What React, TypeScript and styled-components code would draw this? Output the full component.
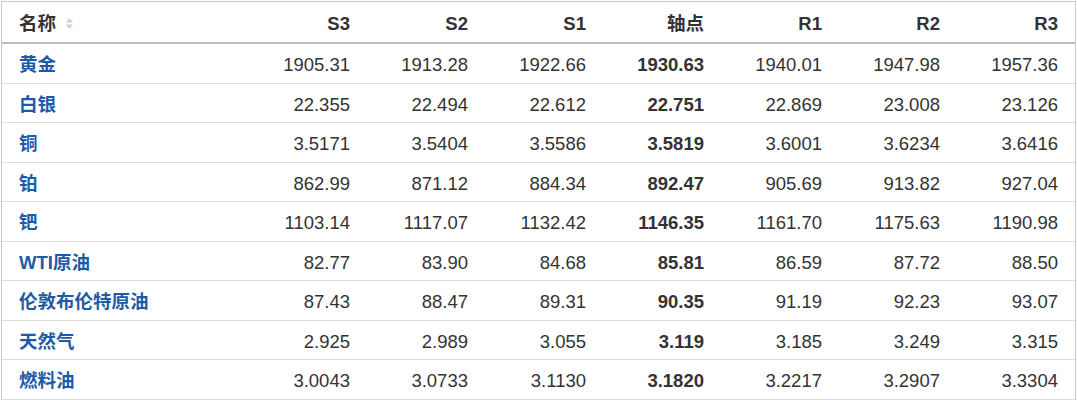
import React from "react";
import styled, { createGlobalStyle } from "styled-components";

const Global = createGlobalStyle`
  html, body { margin: 0; padding: 0; background: #fff; }
  body { font-family: "Liberation Sans", Arial, "Noto Sans CJK SC", sans-serif; color: #333; }
`;

const Wrapper = styled.div`
  margin: 1px 1px 0 1px;
  border: 1px solid #c8c8c8;
  border-bottom: none;
  background: #fff;
`;

const Table = styled.table`
  width: 100%;
  border-collapse: collapse;
  table-layout: fixed;
  font-size: 18.5px;
`;

const HeadCell = styled.th<{ $left?: boolean }>`
  padding: 10px 17px 7px;
  line-height: 23px;
  font-weight: bold;
  color: #333;
  text-align: ${(p) => (p.$left ? "left" : "right")};
  border-bottom: 2px solid #bdbdbd;
  white-space: nowrap;
`;

const Row = styled.tr`
  border-bottom: 1px solid #dcdcdc;
`;

const NameCell = styled.td`
  padding: 10px 17px 6px;
  line-height: 22.5px;
  text-align: left;
  white-space: nowrap;
`;

const NameLink = styled.a`
  color: #1c5ba6;
  font-weight: bold;
  text-decoration: none;
  font-family: "Liberation Sans", Arial, "Noto Sans CJK SC", sans-serif;
`;

const NumCell = styled.td<{ $bold?: boolean }>`
  padding: 10px 17px 6px;
  line-height: 22.5px;
  text-align: right;
  color: #333;
  font-weight: ${(p) => (p.$bold ? "bold" : "normal")};
  white-space: nowrap;
`;

const SortIcon = styled.svg`
  display: inline-block;
  vertical-align: middle;
  margin-left: 10px;
  margin-top: -3px;
`;

const rows: [string, string[]][] = [
  ["黄金", ["1905.31", "1913.28", "1922.66", "1930.63", "1940.01", "1947.98", "1957.36"]],
  ["白银", ["22.355", "22.494", "22.612", "22.751", "22.869", "23.008", "23.126"]],
  ["铜", ["3.5171", "3.5404", "3.5586", "3.5819", "3.6001", "3.6234", "3.6416"]],
  ["铂", ["862.99", "871.12", "884.34", "892.47", "905.69", "913.82", "927.04"]],
  ["钯", ["1103.14", "1117.07", "1132.42", "1146.35", "1161.70", "1175.63", "1190.98"]],
  ["WTI原油", ["82.77", "83.90", "84.68", "85.81", "86.59", "87.72", "88.50"]],
  ["伦敦布伦特原油", ["87.43", "88.47", "89.31", "90.35", "91.19", "92.23", "93.07"]],
  ["天然气", ["2.925", "2.989", "3.055", "3.119", "3.185", "3.249", "3.315"]],
  ["燃料油", ["3.0043", "3.0733", "3.1130", "3.1820", "3.2217", "3.2907", "3.3304"]],
];

const heads = ["S3", "S2", "S1", "轴点", "R1", "R2", "R3"];

export default function App() {
  return (
    <>
      <Global />
      <Wrapper>
        <Table>
          <colgroup>
            <col style={{ width: 247 }} />
            {heads.map((h) => (
              <col key={h} />
            ))}
          </colgroup>
          <thead>
            <tr>
              <HeadCell $left>
                名称
                <SortIcon width="7" height="11" viewBox="0 0 7 11">
                  <path d="M3.5 0 L7 4.5 H0 Z" fill="#cfcfcf" />
                  <path d="M0 6.5 H7 L3.5 11 Z" fill="#cfcfcf" />
                </SortIcon>
              </HeadCell>
              {heads.map((h) => (
                <HeadCell key={h}>{h}</HeadCell>
              ))}
            </tr>
          </thead>
          <tbody>
            {rows.map(([name, vals]) => (
              <Row key={name}>
                <NameCell>
                  <NameLink href="#">{name}</NameLink>
                </NameCell>
                {vals.map((v, i) => (
                  <NumCell key={i} $bold={i === 3}>
                    {v}
                  </NumCell>
                ))}
              </Row>
            ))}
          </tbody>
        </Table>
      </Wrapper>
    </>
  );
}
